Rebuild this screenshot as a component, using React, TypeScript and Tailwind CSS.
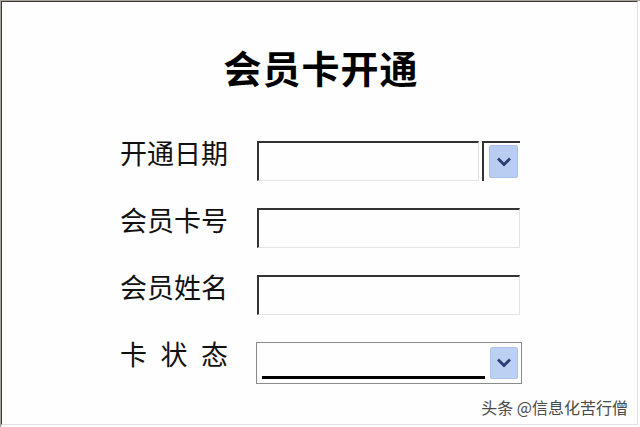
import React from "react";

const cjk = { fontFamily: '"Noto Sans CJK SC", "Noto Sans", sans-serif' };

function Chevron() {
  return (
    <svg width="14" height="10" viewBox="0 0 14 10">
      <path d="M2 2.5 L7 7.5 L12 2.5" fill="none" stroke="#2b3f74" strokeWidth="2.8" strokeLinecap="square" />
    </svg>
  );
}

function Label({ children }: { children: React.ReactNode }) {
  return (
    <div className="w-[137px] shrink-0 -mt-[2px]">
      <div className="w-[108px] flex justify-between text-[27px] leading-none text-[#111]">{children}</div>
    </div>
  );
}

function TextBox({ w }: { w: number }) {
  return (
    <div
      className="h-[40px] bg-[#fefefe] border-t-2 border-l-2 border-t-[#333] border-l-[#333] border-b border-r border-b-[#e4e4e4] border-r-[#e4e4e4]"
      style={{ width: w }}
    />
  );
}

export default function App() {
  return (
    <div className="relative w-[640px] h-[427px] bg-white overflow-hidden" style={cjk}>
      <div className="w-full h-full border-t border-l border-[#a8a49c]">
        <div className="w-[637px] h-[424px] border-t border-l border-t-[#3a3a3a] border-l-[#3a3a3a] border-r border-b border-r-[#e2e2e2] border-b-[#e2e2e2] bg-[#fefefe]">
          <div className="pt-[46px] flex justify-center">
            <div className="text-[38px] font-bold leading-none text-black tracking-[1px] pl-[3px]">会员卡开通</div>
          </div>
          <div className="mt-[55px] ml-[118px] flex flex-col gap-[27px]">
            <div className="flex items-start">
              <Label>
                <span>开通日期</span>
              </Label>
              <TextBox w={222} />
              <div className="ml-[3px] w-[38px] h-[40px] border-t-2 border-l-2 border-[#333] pl-[5px] pt-[2px]">
                <div className="w-[29px] h-[33px] rounded-[2px] bg-[#b9cdf2] border border-[#a9bfe9] flex items-center justify-center">
                  <Chevron />
                </div>
              </div>
            </div>
            <div className="flex items-start">
              <Label>
                <span>会员卡号</span>
              </Label>
              <TextBox w={263} />
            </div>
            <div className="flex items-start">
              <Label>
                <span>会员姓名</span>
              </Label>
              <TextBox w={263} />
            </div>
            <div className="flex items-start">
              <Label>
                <span>卡</span>
                <span>状</span>
                <span>态</span>
              </Label>
              <div className="-ml-[1px] w-[266px] h-[42px] border border-[#8a8a8a] bg-[#fefefe] flex items-stretch">
                <div className="flex-1 flex flex-col justify-end pb-[4px] pl-[5px]">
                  <div className="w-[223px] h-[3px] bg-black" />
                </div>
                <div className="w-[28px] my-[4px] mr-[3px] rounded-[2px] bg-[#bcd0f3] border border-[#aec2ea] flex items-center justify-center">
                  <Chevron />
                </div>
              </div>
            </div>
          </div>
        </div>
      </div>
      <div
        className="absolute right-[12px] bottom-[12px] text-[16px] leading-none text-[#4a4a4a]"
        style={{ textShadow: "0 0 2px #fff, 0 0 2px #fff" }}
      >
        头条 @信息化苦行僧
      </div>
    </div>
  );
}
